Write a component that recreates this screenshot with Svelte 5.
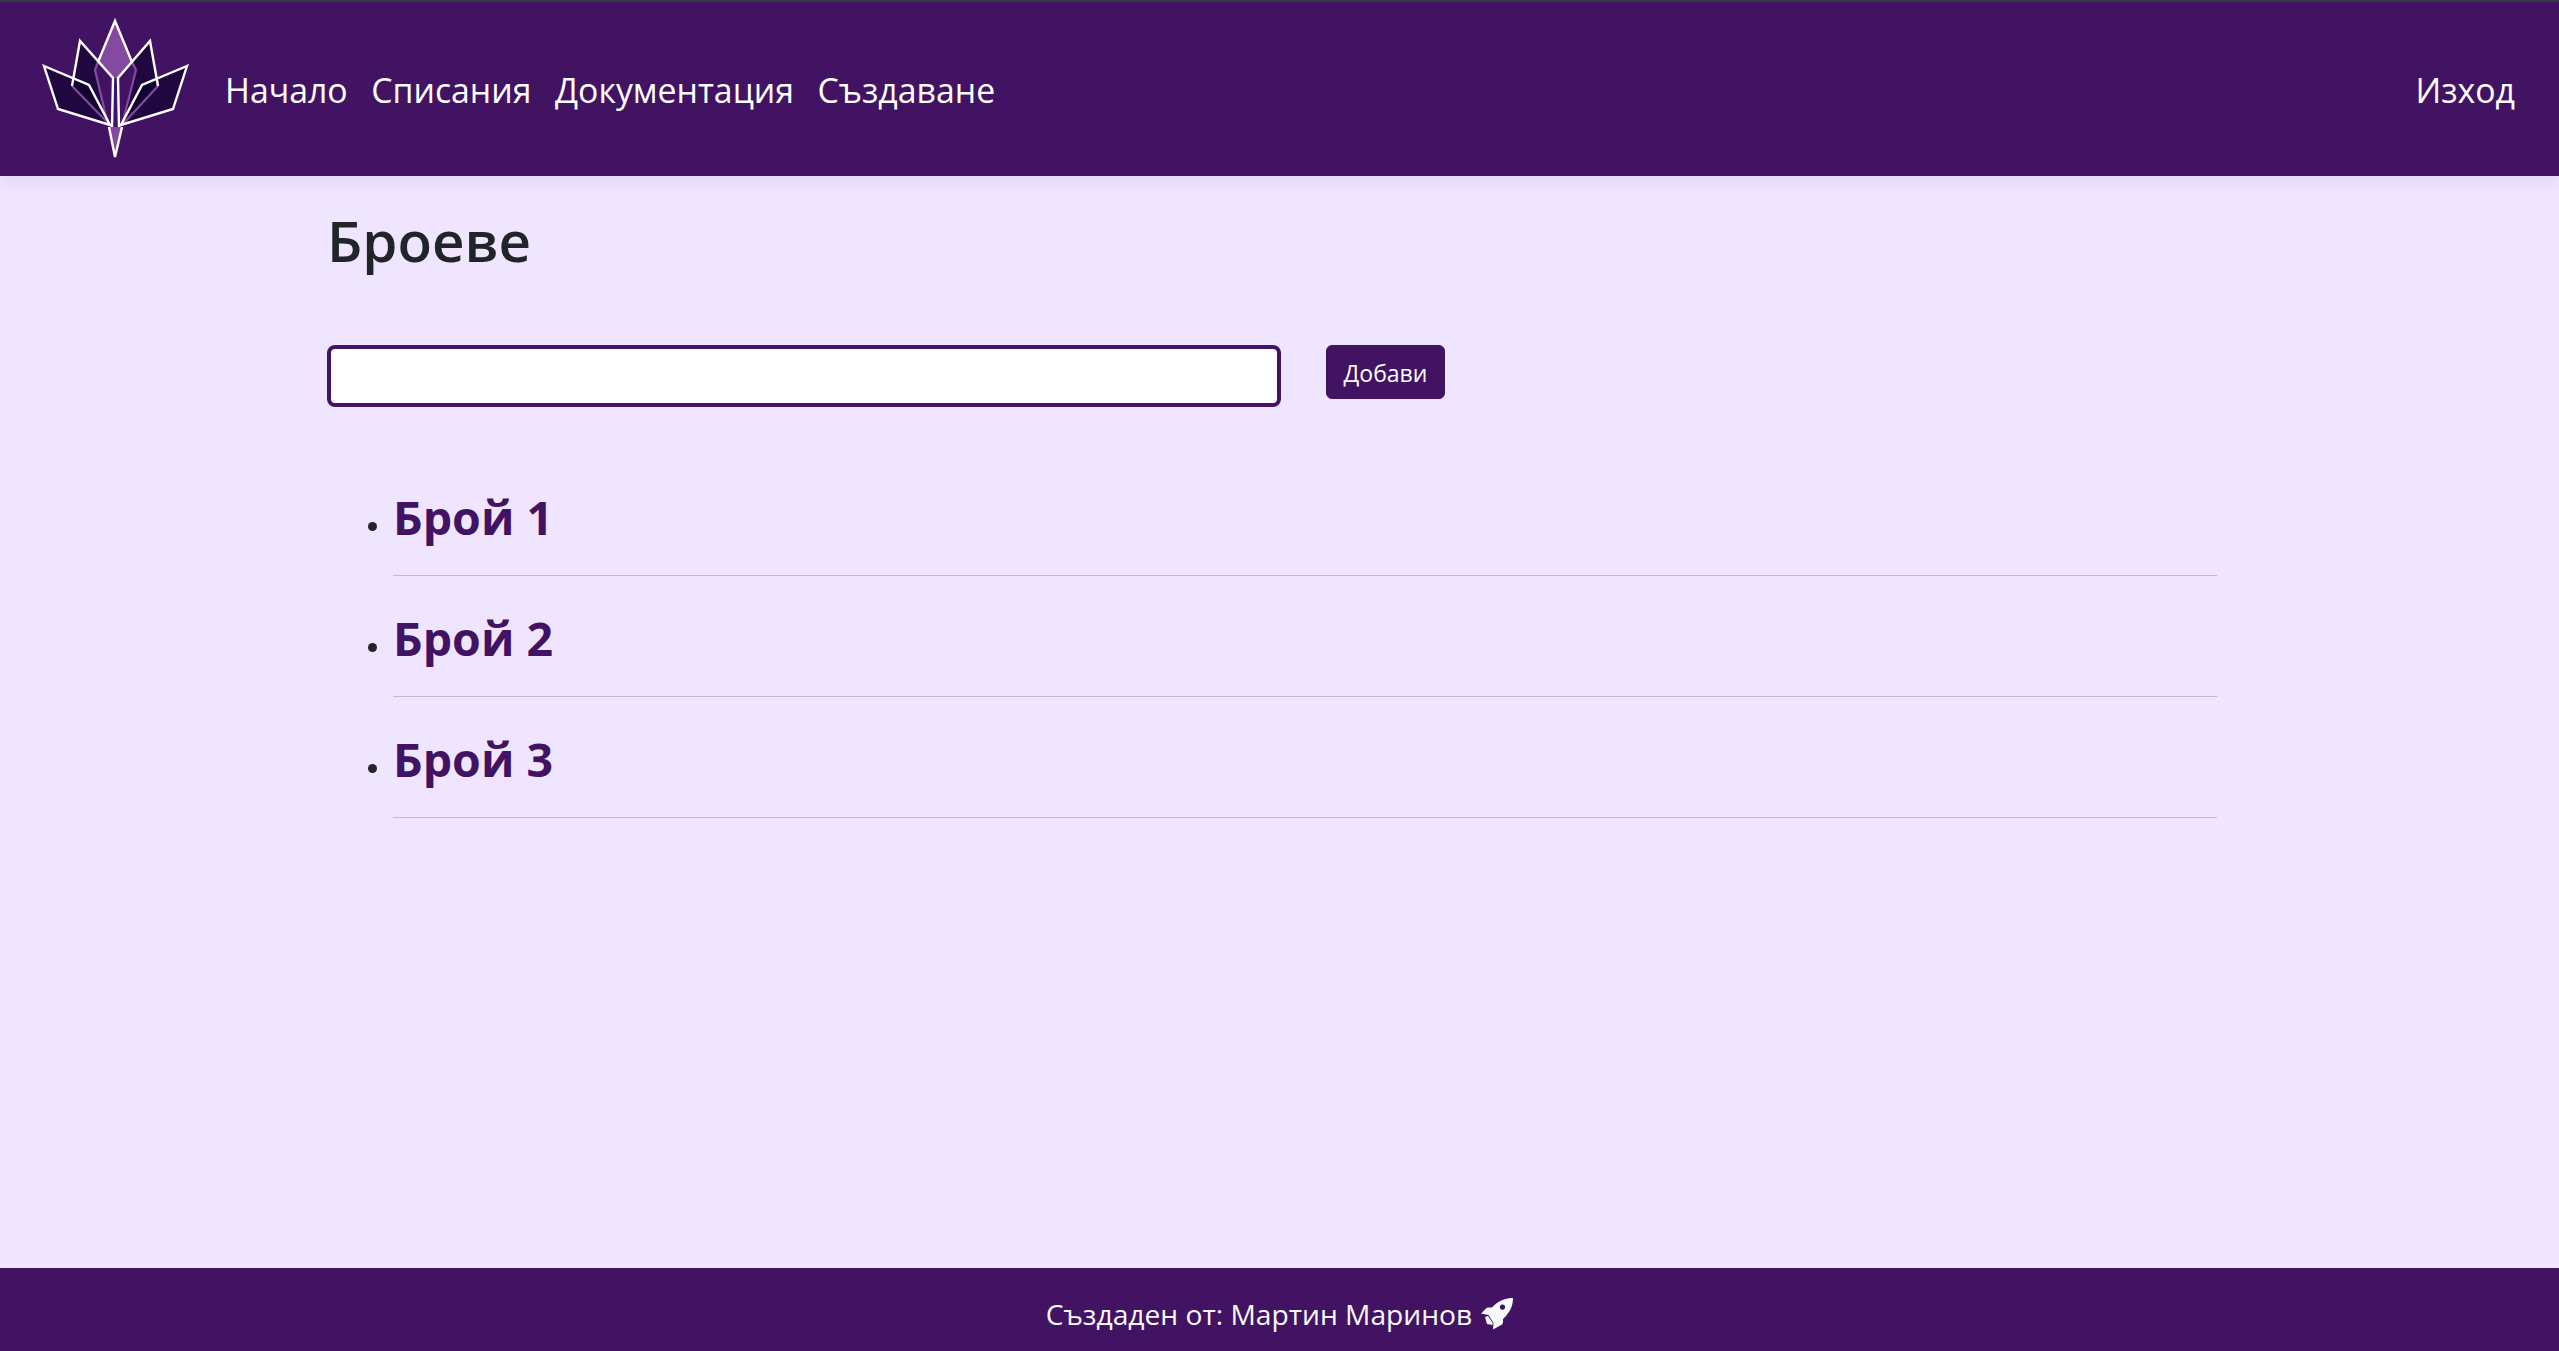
<script>
	let issues = ['Брой 1', 'Брой 2', 'Брой 3'];
	let links = ['Начало', 'Списания', 'Документация', 'Създаване'];
	let title = $state('');
</script>

<div class="page">
	<nav class="navbar">
		<svg class="logo" viewBox="0 1 170 156" aria-label="logo">
			<path class="top" d="M85 11 L102 52 L88 68 H83 L68 52 Z" />
			<path class="petal" d="M50 31 L68 52 L65 60 L78 115 L42 76 Z" />
			<path class="petal" d="M120 31 L102 52 L106 60 L92 115 L128 76 Z" />
			<path class="petal" d="M14 56 L59 75 L80 115 L28 99 Z" />
			<path class="petal" d="M157 56 L112 75 L91 115 L143 99 Z" />
			<path class="top" d="M79 117 L85 147 L92 117 Z" />
			<path class="violet" d="M68 52 L65 60 L78 115 M102 52 L106 60 L92 115 M42 76 L80 115 M128 76 L92 115" />
			<path class="line" d="M68 52 L85 11 L102 52" />
			<path class="line" d="M42 76 L50 31 L83 68 L82 117 M128 76 L120 31 L88 68 L89 117" />
			<path class="line" d="M14 56 L59 75 L80 115 L28 99 Z" />
			<path class="line" d="M157 56 L112 75 L91 115 L143 99 Z" />
			<path class="line" d="M79 117 L85 147 L92 117" />
		</svg>
		<ul class="links">
			{#each links as link}
				<li><a href="#top">{link}</a></li>
			{/each}
		</ul>
		<a class="logout" href="#top">Изход</a>
	</nav>

	<main>
		<h1>Броеве</h1>
		<form onsubmit={(e) => e.preventDefault()}>
			<input type="text" bind:value={title} />
			<button type="submit">Добави</button>
		</form>
		<ul class="issues">
			{#each issues as issue}
				<li><a href="#top">{issue}</a></li>
			{/each}
		</ul>
	</main>

	<footer>
		<span>Създаден от: Мартин Маринов</span>
		<svg class="rocket" viewBox="0 0 32 32" aria-hidden="true">
			<path fill-rule="evenodd" d="M32 0 C32 8 29 13 25 18 L22 21 V24 Q22 25.5 21 26.5 L12 31.5 L12.5 25 L7.5 17 L0 15.5 L5 10.5 Q6 9.5 7.5 9.5 H11 L13 7.5 C19 2 25 0 32 0 Z M21.5 6.5 A2.6 2.6 0 1 0 21.5 11.7 A2.6 2.6 0 1 0 21.5 6.5 Z" />
			<path d="M4 19 L7 18 L12 25.5 L11 27 L6 26 Z" />
		</svg>
	</footer>
</div>

<style>
	:global(body) {
		margin: 0;
		background: #f0e5ff;
		font-family: "Open Sans", "Noto Sans", sans-serif;
		color: #212529;
	}

	.page {
		display: flex;
		flex-direction: column;
		min-height: 100vh;
	}

	.navbar {
		display: flex;
		align-items: center;
		box-sizing: border-box;
		height: 176px;
		padding: 0 44px 0 30px;
		border-top: 2px solid #343a40;
		background: #421362;
		box-shadow: 0 8px 16px rgba(0, 0, 0, 0.05);
	}

	.logo {
		width: 170px;
		height: 156px;
		margin-right: 25px;
	}

	.line {
		fill: none;
		stroke: #fff;
		stroke-width: 2.4;
	}

	.top {
		fill: #834a9f;
	}

	.petal {
		fill: #0a0028;
		fill-opacity: 0.6;
	}

	.violet {
		fill: none;
		stroke: #834a9f;
		stroke-width: 2.2;
	}

	.links {
		display: flex;
		gap: 23.5px;
		margin: 0;
		padding: 2px 0 0;
		list-style: none;
	}

	.navbar a {
		color: #fff;
		font-size: 33.8px;
		text-decoration: none;
	}

	.logout {
		margin-left: auto;
		padding-top: 2px;
	}

	main {
		flex: 1;
		width: 1890px;
		margin-left: 327px;
	}

	h1 {
		margin: 31px 0 70px;
		font-size: 56.5px;
		font-weight: 600;
		line-height: 1.2;
	}

	form {
		display: flex;
		align-items: flex-start;
		gap: 45px;
	}

	input {
		box-sizing: border-box;
		width: 954px;
		height: 62px;
		background: #fff;
		border: 4px solid #421362;
		border-radius: 8px;
	}

	button {
		width: 119px;
		height: 54px;
		padding: 2px 0 0;
		background: #421362;
		color: #fff;
		font-family: inherit;
		font-size: 23px;
		border: 1px solid #421362;
		border-radius: 6px;
	}

	.issues {
		margin: 48px 0 0;
		padding-left: 66px;
	}

	.issues li {
		height: 120px;
		border-bottom: 1px solid #c4bace;
		font-size: 26px;
		line-height: 124px;
	}

	.issues a {
		color: #421362;
		font-size: 46.5px;
		font-weight: 700;
		text-decoration: none;
	}

	footer {
		display: flex;
		justify-content: center;
		align-items: center;
		gap: 9px;
		box-sizing: border-box;
		height: 83px;
		padding-top: 8px;
		background: #421362;
		color: #f8f9fa;
		font-size: 28.2px;
	}

	.rocket {
		width: 32px;
		height: 32px;
		fill: #f8f9fa;
	}
</style>
